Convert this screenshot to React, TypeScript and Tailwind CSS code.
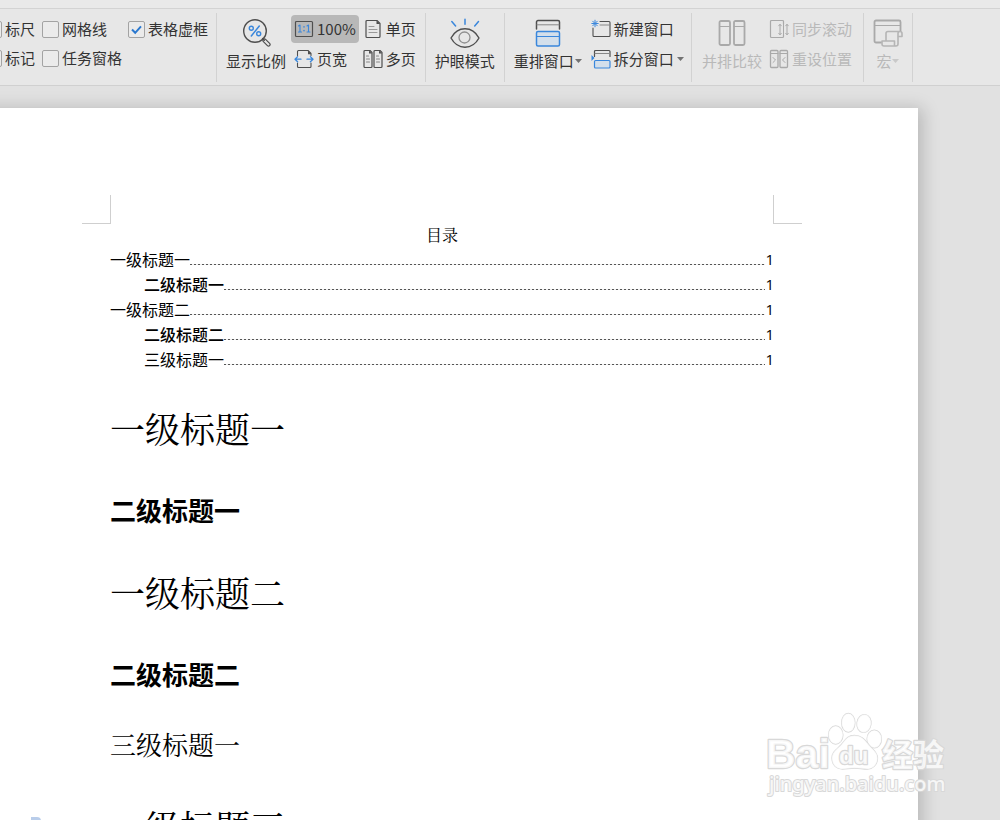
import React from "react";

const Svg = ({ w, h, children }: { w: number; h: number; children: React.ReactNode }) => (
  <svg width={w} height={h} viewBox={`0 0 ${w} ${h}`} fill="none" strokeLinecap="round" strokeLinejoin="round" className="shrink-0" aria-hidden="true">
    {children}
  </svg>
);

const DARK = "#4f4f4f";
const BLUE = "#3a87dc";
const DIM = "#a9a9a9";

const ZoomIcon = () => (
  <Svg w={30} h={30}>
    <circle cx="14" cy="13" r="11.3" stroke={DARK} strokeWidth="1.4" />
    <path d="M21.5 20.5l1.8 1.8" stroke={DARK} strokeWidth="1.4" />
    <path d="M22.4 23.6l4 4a1.5 1.5 0 0 0 2.2-2.2l-4-4a1.5 1.5 0 0 0-2.2 2.2z" stroke={DARK} strokeWidth="1.2" />
    <path d="M18.3 8L10.3 18" stroke={BLUE} strokeWidth="1.5" />
    <circle cx="10.3" cy="10.2" r="2" stroke={BLUE} strokeWidth="1.4" />
    <circle cx="17.7" cy="15.8" r="2" stroke={BLUE} strokeWidth="1.4" />
  </Svg>
);

const RatioIcon = () => (
  <Svg w={20} h={18}>
    <rect x="1.5" y="1.5" width="17" height="15" rx="1" stroke={DARK} strokeWidth="1.2" />
    <path d="M4.5 6l1.5-1v7M4.5 12h3M13 6l1.5-1v7M13 12h3" stroke={BLUE} strokeWidth="1.1" />
    <path d="M10 6.8v.3M10 10.5v.3" stroke={BLUE} strokeWidth="1.5" />
  </Svg>
);

const PageWidthIcon = () => (
  <Svg w={20} h={20}>
    <path d="M3.5 6.5v-4a1 1 0 0 1 1-1H14l3 3v2M3.5 14v3.5a1 1 0 0 0 1 1H16a1 1 0 0 0 1-1V14" stroke={DARK} strokeWidth="1.1" />
    <path d="M14 1.5l3 3v.8h-3z" fill={DARK} />
    <path d="M1 10.2h6M3.6 7.6L1 10.2l2.6 2.6M19 10.2h-6M16.4 7.6L19 10.2l-2.6 2.6" stroke={BLUE} strokeWidth="1.3" />
  </Svg>
);

const SinglePageIcon = () => (
  <Svg w={20} h={20}>
    <path d="M3 2.5a1 1 0 0 1 1-1h10l3 3v13a1 1 0 0 1-1 1H4a1 1 0 0 1-1-1z" stroke={DARK} strokeWidth="1.2" />
    <path d="M13.5 1.5l3.5 3.5h-3.5z" fill={DARK} />
    <path d="M6 7.5h5M6 10.5h8M6 13.5h8" stroke="#999" strokeWidth="1.1" />
  </Svg>
);

const MultiPageIcon = () => (
  <Svg w={20} h={20}>
    <path d="M1 2.5a1 1 0 0 1 1-1h5l2 2v14a1 1 0 0 1-1 1H2a1 1 0 0 1-1-1zM11 2.5a1 1 0 0 1 1-1h5l2 2v14a1 1 0 0 1-1 1h-6a1 1 0 0 1-1-1z" stroke={DARK} strokeWidth="1.2" />
    <path d="M6 1.5l3 3H6zM16 1.5l3 3h-3z" fill={DARK} />
    <path d="M3.5 7h2M3.5 10h3M3.5 13h3M13.5 7h2M13.5 10h3M13.5 13h3" stroke="#888" strokeWidth="1.1" />
  </Svg>
);

const EyeIcon = () => (
  <Svg w={30} h={30}>
    <path d="M1 20C4 14.500 9 10.800 15 10.800S26 14.500 29 20c-3 5.500-8 9.200-14 9.200S4 25.500 1 20z" stroke={DARK} strokeWidth="1.4" />
    <circle cx="14.5" cy="19.5" r="5.5" stroke="#8f8f8f" strokeWidth="1.3" />
    <path d="M15 1.200v5M1.800 3.500l3.800 4.500M28.500 3.500l-3.800 4.500" stroke={BLUE} strokeWidth="1.5" />
  </Svg>
);

const ArrangeIcon = () => (
  <Svg w={26} h={28}>
    <path d="M1.5 10V3a1.5 1.5 0 0 1 1.5-1.5h20A1.5 1.5 0 0 1 24.5 3v7" stroke={DARK} strokeWidth="1.5" />
    <path d="M2 5.800h22" stroke="#888" strokeWidth="1" />
    <rect x="1.5" y="12.5" width="23" height="14.5" rx="1.5" fill="#d3dfeb" stroke={BLUE} strokeWidth="1.5" />
    <path d="M2 17.500h22" stroke={BLUE} strokeWidth="1.2" />
  </Svg>
);

const NewWindowIcon = () => (
  <Svg w={20} h={20}>
    <path d="M9 2.500h9a1 1 0 0 1 1 1v13a1 1 0 0 1-1 1H3a1 1 0 0 1-1-1V9" stroke={DARK} strokeWidth="1.1" />
    <path d="M9 6h10" stroke="#888" strokeWidth="1" />
    <path d="M4 1.200v6.600M.800 4.500h6.400M1.700 2.200l4.600 4.600M6.300 2.200L1.700 6.800" stroke={BLUE} strokeWidth="1" />
  </Svg>
);

const SplitIcon = () => (
  <Svg w={20} h={20}>
    <path d="M3.5 7.500v-5a1 1 0 0 1 1-1H18a1 1 0 0 1 1 1v5" stroke={DARK} strokeWidth="1.2" />
    <path d="M4 4.500h14.500" stroke="#888" strokeWidth="1" />
    <rect x="3.5" y="11.5" width="15.5" height="7.5" rx="1" fill="#d3dfeb" stroke={BLUE} strokeWidth="1.2" />
    <path d="M.5 6l3 3-3 3z" fill={BLUE} />
  </Svg>
);

const CompareIcon = () => (
  <Svg w={28} h={26}>
    <rect x="1.5" y="1" width="10.5" height="24" rx="1.5" stroke={DIM} strokeWidth="1.8" />
    <rect x="16" y="1" width="10.5" height="24" rx="1.5" stroke={DIM} strokeWidth="1.8" />
    <path d="M2 6.500h10M16 6.500h10" stroke={DIM} strokeWidth="1" />
  </Svg>
);

const SyncScrollIcon = () => (
  <Svg w={20} h={20}>
    <path d="M14.5 5V2.500a1 1 0 0 0-1-1h-11a1 1 0 0 0-1 1v15a1 1 0 0 0 1 1h11a1 1 0 0 0 1-1V16" stroke={DIM} strokeWidth="1.2" />
    <path d="M11 5.500v10M9.700 6.800L11 5.300l1.300 1.500M9.700 14.300l1.300 1.500 1.300-1.500M18 5.500v10M16.700 6.800L18 5.300l1.300 1.500M16.700 14.300l1.300 1.500 1.300-1.500M14.500 5v11" stroke={DIM} strokeWidth="1" />
  </Svg>
);

const ResetIcon = () => (
  <Svg w={20} h={20}>
    <rect x="1.5" y="1.5" width="7.5" height="17" rx="1" stroke={DIM} strokeWidth="1.3" />
    <rect x="11" y="1.5" width="7.5" height="17" rx="1" stroke={DIM} strokeWidth="1.3" />
    <path d="M2 4.500h7M11 4.500h7M4 8.500l2.500 2.500L4 13.500M16 8.500L13.500 11l2.500 2.500" stroke={DIM} strokeWidth="1" />
  </Svg>
);

const MacroIcon = () => (
  <Svg w={30} h={28}>
    <path d="M8 23.500H3A1.500 1.500 0 0 1 1.500 22V3A1.500 1.500 0 0 1 3 1.500h23A1.500 1.500 0 0 1 27.500 3v9" stroke={DIM} strokeWidth="1.8" />
    <path d="M2 6.500h25" stroke={DIM} strokeWidth="1" />
    <path d="M13 21.500V14.500a2 2 0 0 1 2-2h12a2 2 0 0 1 2 2V17.500h-4V25a2 2 0 0 1-2 2H11a2 2 0 0 1-2-2V22h12.500v3a1.500 1.500 0 0 0 1.500 2M25 17.500v-3a2 2 0 0 1 2-2" fill="#e7e7e7" stroke="#b5b5b5" strokeWidth="1.6" />
  </Svg>
);

const Caret = () => (
  <svg width="7" height="4" viewBox="0 0 7 4" className="shrink-0" aria-hidden="true">
    <path d="M0 0h7L3.500 4z" fill="currentColor" opacity=".65" />
  </svg>
);

const Check = ({ label, checked = false }: { label: string; checked?: boolean }) => (
  <label className="flex h-7 items-center gap-[3px] whitespace-nowrap">
    <span className="grid shrink-0">
      <input
        type="checkbox"
        defaultChecked={checked}
        className="peer col-start-1 row-start-1 size-[17px] appearance-none rounded-[2px] border border-[#a3a3a3] bg-[#ebebeb]"
      />
      <svg viewBox="0 0 17 17" className="pointer-events-none invisible col-start-1 row-start-1 size-[17px] peer-checked:visible" aria-hidden="true">
        <path d="M4 8.500l3.200 3.300L13 5.300" fill="none" stroke="#2a78cf" strokeWidth="2" />
      </svg>
    </span>
    {label}
  </label>
);

const Big = ({ icon, label, caret, disabled }: { icon: React.ReactNode; label: string; caret?: boolean; disabled?: boolean }) => (
  <button type="button" disabled={disabled} className="flex flex-col items-center whitespace-nowrap disabled:text-[#b9b9b9]">
    <span className="flex h-[35px] items-center">{icon}</span>
    <span className="flex h-[22px] items-center gap-px">
      {label}
      {caret && <Caret />}
    </span>
  </button>
);

const Small = ({ icon, label, caret, disabled, active }: { icon: React.ReactNode; label: string; caret?: boolean; disabled?: boolean; active?: boolean }) => (
  <button
    type="button"
    disabled={disabled}
    aria-pressed={active}
    className="flex h-7 items-center gap-[3px] rounded px-[3px] whitespace-nowrap disabled:text-[#b9b9b9] aria-pressed:bg-[#b8b8b8]"
  >
    {icon}
    {label}
    {caret && <Caret />}
  </button>
);

const Group = ({ children }: { children: React.ReactNode }) => (
  <div className="flex shrink-0 items-start border-r border-[#d2d2d2] pt-0.5">{children}</div>
);

const Stack = ({ children }: { children: React.ReactNode }) => <div className="flex flex-col items-start gap-0.5">{children}</div>;

const TocRow = ({ text, level = 1, strong = false }: { text: string; level?: number; strong?: boolean }) => (
  <li className={level > 1 ? "flex h-[25px] pl-[34px]" : "flex h-[25px]"}>
    <a href="#" className={strong ? "flex flex-1 font-medium" : "flex flex-1 font-normal"}>
      {text}
      <span className="mt-[17px] h-px flex-1 bg-[repeating-linear-gradient(90deg,#555_0_2px,#eee_2px_4px)]" />
      <span className="font-['Open_Sans','Noto_Sans_CJK_SC',sans-serif] text-[15px] font-normal">1</span>
    </a>
  </li>
);

const H1 = ({ children }: { children: React.ReactNode }) => (
  <h1 className="relative mt-10 font-['Noto_Serif_CJK_SC','Noto_Sans_CJK_SC',serif] text-[35px] leading-[48px] font-normal">{children}</h1>
);

const Watermark = () => (
  <svg width="190" height="90" viewBox="0 0 190 90" className="pointer-events-none absolute right-[48px] bottom-[18px]" role="img" aria-label="Baidu 经验">
    <g fill="#fff" fillOpacity=".8" stroke="#d8d8d8" strokeWidth="1.3" paintOrder="stroke" strokeLinejoin="round">
      <text x="4" y="56" fontSize="41" fontWeight="700" fontFamily="Liberation Sans, sans-serif" strokeWidth="2.4">Bai</text>
      <ellipse cx="73.7" cy="23" rx="7.2" ry="9" />
      <ellipse cx="86.3" cy="10.7" rx="6.6" ry="9.3" />
      <ellipse cx="102" cy="11.5" rx="7" ry="9" transform="rotate(8 102 11.5)" />
      <ellipse cx="112.3" cy="27" rx="7.2" ry="8.8" />
      <path d="M92.5 23.500c7 0 10 4 14 9s9 7.500 9 13.500c0 7-5 11-10 11-5 0-8-1-13-1s-8 1-12 1c-6 0-10.500-4-10.500-11 0-6.500 5-8.500 9.500-13.500 4-5 6-9 13-9z" />
      <text x="77" y="52" fontSize="24" fontWeight="700" fontFamily="Liberation Sans, sans-serif" strokeWidth="2.4">du</text>
      <text x="120" y="54" fontSize="31" fontWeight="700" fontFamily="Noto Sans CJK SC, sans-serif" strokeWidth="2.4">经验</text>
      <text x="7" y="79" fontSize="20" fontWeight="500" fontFamily="Noto Sans, sans-serif" strokeWidth="2">jingyan.baidu.com</text>
    </g>
  </svg>
);

export default function App() {
  return (
    <div className="relative flex h-screen flex-col overflow-hidden bg-[#e1e1e1] font-['Open_Sans','Noto_Sans_CJK_SC',sans-serif] text-[15px] text-[#333]">
      <header className="shrink-0 overflow-hidden border-b border-[#d0d0d0] bg-[#e7e7e7]">
        <div className="h-[9px] border-b border-[#d3d3d3] bg-[#e9e9e9]" />
        <div role="toolbar" className="flex pt-1 pb-[3px] font-['Noto_Sans_CJK_SC',sans-serif]">
          <Group>
            <div className="-ml-[15px] grid h-[67px] grid-cols-[57px_86px_88px] content-start items-start gap-y-px">
              <Check label="标尺" />
              <Check label="网格线" />
              <Check label="表格虚框" checked />
              <Check label="标记" />
              <Check label="任务窗格" />
            </div>
          </Group>
          <Group>
            <div className="flex gap-[5px] pr-1.5 pl-[9px]">
              <Big icon={<ZoomIcon />} label="显示比例" />
              <Stack>
                <Small icon={<RatioIcon />} label="100%" active />
                <Small icon={<PageWidthIcon />} label="页宽" />
              </Stack>
              <div className="-ml-1">
                <Stack>
                  <Small icon={<SinglePageIcon />} label="单页" />
                  <Small icon={<MultiPageIcon />} label="多页" />
                </Stack>
              </div>
            </div>
          </Group>
          <Group>
            <div className="px-[9px]">
              <Big icon={<EyeIcon />} label="护眼模式" />
            </div>
          </Group>
          <Group>
            <div className="flex gap-1.5 pr-1 pl-[9px]">
              <Big icon={<ArrangeIcon />} label="重排窗口" caret />
              <Stack>
                <Small icon={<NewWindowIcon />} label="新建窗口" />
                <Small icon={<SplitIcon />} label="拆分窗口" caret />
              </Stack>
            </div>
          </Group>
          <Group>
            <div className="flex gap-1 pr-2 pl-2.5">
              <Big icon={<CompareIcon />} label="并排比较" disabled />
              <Stack>
                <Small icon={<SyncScrollIcon />} label="同步滚动" disabled />
                <Small icon={<ResetIcon />} label="重设位置" disabled />
              </Stack>
            </div>
          </Group>
          <Group>
            <div className="px-[9px]">
              <Big icon={<MacroIcon />} label="宏" caret disabled />
            </div>
          </Group>
        </div>
      </header>

      <main className="flex-1 pt-[22px] pr-[82px]">
        <article className="-ml-[34px] min-h-full bg-white px-36 pt-[87px] text-black shadow-[3px_2px_16px_2px_rgba(0,0,0,0.18)]">
          <div className="-mx-7 flex justify-between">
            <span className="size-[29px] border-r border-b border-[#cfcfcf]" />
            <span className="size-[29px] border-b border-l border-[#cfcfcf]" />
          </div>
          <section className="-mt-0.5 font-['Noto_Sans_CJK_SC',sans-serif] text-[16px] leading-[25px]">
            <p className="text-center font-['Noto_Serif_CJK_SC','Noto_Sans_CJK_SC',serif] font-normal">目录</p>
            <ul>
              <TocRow text="一级标题一" />
              <TocRow text="二级标题一" level={2} strong />
              <TocRow text="一级标题二" />
              <TocRow text="二级标题二" level={2} strong />
              <TocRow text="三级标题一" level={2} />
            </ul>
          </section>
          <div className="-mt-2 font-['Noto_Sans_CJK_SC',sans-serif]">
            <H1>一级标题一</H1>
            <h2 className="mt-10 text-[26px] leading-9 font-bold">二级标题一</h2>
            <H1>一级标题二</H1>
            <h2 className="mt-10 text-[26px] leading-9 font-bold">二级标题二</h2>
            <h3 className="mt-[34px] font-['Noto_Serif_CJK_SC','Noto_Sans_CJK_SC',serif] text-[26px] leading-9 font-normal">三级标题一</h3>
            <H1>
              一级标题三
              <span className="absolute top-[15px] -left-[79px] h-3 w-2.5 rounded-tr bg-[#b9cdea]" />
            </H1>
          </div>
        </article>
      </main>
      <Watermark />
    </div>
  );
}
